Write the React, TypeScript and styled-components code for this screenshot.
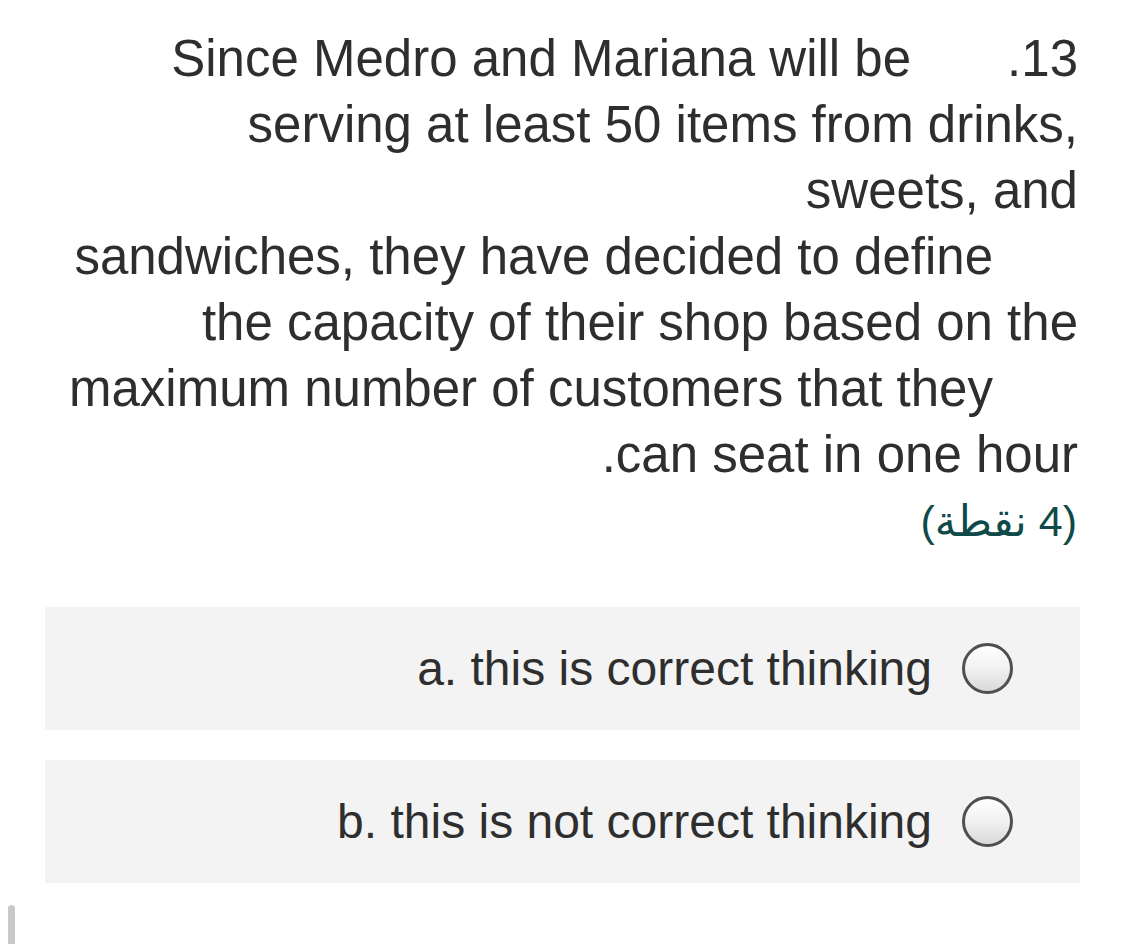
import React from "react";
import styled, { createGlobalStyle } from "styled-components";

const Global = createGlobalStyle`
  html, body { margin: 0; padding: 0; background: #ffffff; }
  body { font-family: "Liberation Sans", Arial, "DejaVu Sans", sans-serif; }
`;

const Page = styled.div`
  width: 1125px;
  height: 944px;
  overflow: hidden;
  box-sizing: border-box;
  padding: 26px 45px 0 45px;
  display: flex;
  flex-direction: column;
`;

const Question = styled.div`
  display: flex;
  flex-direction: column;
  align-items: flex-end;
  color: #2e2e2e;
  font-size: 51px;
  line-height: 66px;
  padding-right: 2px;
`;

const Line = styled.div<{ $indent?: number }>`
  display: flex;
  justify-content: flex-end;
  gap: 96px;
  white-space: nowrap;
  margin-right: ${(p) => p.$indent ?? 0}px;
`;

const Points = styled.div`
  color: #0f4a49;
  font-family: "Liberation Sans", "DejaVu Sans", sans-serif;
  font-size: 43px;
  line-height: 66px;
  text-align: right;
  padding-right: 3px;
`;

const Options = styled.div`
  margin-top: 53px;
  display: flex;
  flex-direction: column;
  gap: 30px;
`;

const Option = styled.label`
  height: 123px;
  background: #f3f3f3;
  display: flex;
  align-items: center;
  justify-content: flex-end;
  gap: 30px;
  padding-right: 67px;
  color: #2e2e2e;
  font-size: 48px;
`;

const Radio = styled.span`
  width: 51px;
  height: 51px;
  box-sizing: border-box;
  border-radius: 50%;
  border: 3px solid #4f4f4f;
  background: linear-gradient(180deg, #ffffff 0%, #f1f1f1 50%, #d9d9d9 100%);
  flex: none;
`;

const Scroll = styled.div`
  margin-top: 22px;
  margin-left: -37px;
  width: 7px;
  height: 60px;
  border-radius: 4px 4px 0 0;
  background: #c9c9c9;
`;

export default function App() {
  return (
    <>
      <Global />
      <Page>
        <Question>
          <Line>
            <span>Since Medro and Mariana will be</span>
            <span>.13</span>
          </Line>
          <Line>serving at least 50 items from drinks,</Line>
          <Line>sweets, and</Line>
          <Line $indent={85}>sandwiches, they have decided to define</Line>
          <Line>the capacity of their shop based on the</Line>
          <Line $indent={85}>maximum number of customers that they</Line>
          <Line>.can seat in one hour</Line>
        </Question>
        <Points dir="rtl">(4 نقطة)</Points>
        <Options>
          <Option>
            <span>a. this is correct thinking</span>
            <Radio />
          </Option>
          <Option>
            <span>b. this is not correct thinking</span>
            <Radio />
          </Option>
        </Options>
        <Scroll />
      </Page>
    </>
  );
}
